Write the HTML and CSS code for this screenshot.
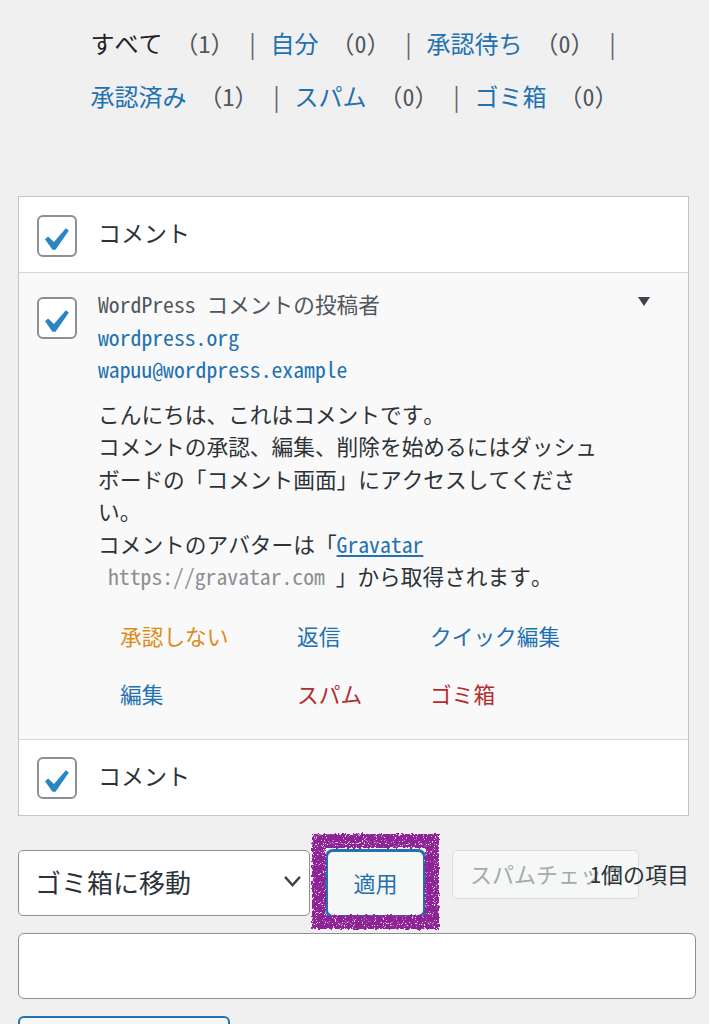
FILE: index.html
```html
<!DOCTYPE html>
<html lang="ja">
<head>
<meta charset="utf-8">
<title>コメント</title>
<link rel="stylesheet" href="styles.css">
</head>
<body>
<nav class="status">
  <div class="status-line"><span class="current">すべて</span> <span class="count">（1）</span> <span class="sep">|</span> <a class="link">自分</a> <span class="count">（0）</span> <span class="sep">|</span> <a class="link">承認待ち</a> <span class="count">（0）</span> <span class="sep">|</span></div>
  <div class="status-line"><a class="link">承認済み</a> <span class="count">（1）</span> <span class="sep">|</span> <a class="link">スパム</a> <span class="count">（0）</span> <span class="sep">|</span> <a class="link">ゴミ箱</a> <span class="count">（0）</span></div>
</nav>

<div class="table">
  <div class="row row-edge">
    <span class="cb"><svg class="check" viewBox="3.17 0.18 15.65 16.1"><path d="M14.83 4.89l1.34.94-5.81 8.38H9.02L5.78 9.67l1.34-1.25 2.57 2.4z"/></svg></span>
    <span class="col-label">コメント</span>
  </div>
  <div class="row row-comment">
    <span class="cb cb-top"><svg class="check" viewBox="3.17 0.18 15.65 16.1"><path d="M14.83 4.89l1.34.94-5.81 8.38H9.02L5.78 9.67l1.34-1.25 2.57 2.4z"/></svg></span>
    <div class="comment">
      <div class="author">
        <div class="author-name">WordPress コメントの投稿者</div>
        <div><a class="link">wordpress.org</a></div>
        <div><a class="link">wapuu@wordpress.example</a></div>
      </div>
      <div class="comment-text">
        <p>こんにちは、これはコメントです。<br>コメントの承認、編集、削除を始めるにはダッシュボードの「コメント画面」にアクセスしてください。<br>コメントのアバターは「<a class="link under">Gravatar</a> <span class="url">https://gravatar.com</span> 」から取得されます。</p>
      </div>
      <div class="row-actions">
        <a class="act unapprove">承認しない</a>
        <a class="act">返信</a>
        <a class="act">クイック編集</a>
        <a class="act">編集</a>
        <a class="act danger">スパム</a>
        <a class="act danger">ゴミ箱</a>
      </div>
    </div>
    <span class="toggle"></span>
  </div>
  <div class="row row-edge row-foot">
    <span class="cb"><svg class="check" viewBox="3.17 0.18 15.65 16.1"><path d="M14.83 4.89l1.34.94-5.81 8.38H9.02L5.78 9.67l1.34-1.25 2.57 2.4z"/></svg></span>
    <span class="col-label">コメント</span>
  </div>
</div>

<div class="bulk">
  <div class="select">
    <span>ゴミ箱に移動</span>
    <svg class="chev" viewBox="0 0 20 14"><path d="M2 2l8 9 8-9" fill="none" stroke="#3c434a" stroke-width="2.6"/></svg>
  </div>
  <button class="apply">適用</button>
  <button class="spam" disabled>スパムチェック</button>
  <span class="num">1個の項目</span>
  <svg class="scribble" viewBox="0 0 134 104" width="134" height="104">
    <defs>
      <filter id="rough" x="-10%" y="-10%" width="120%" height="120%">
        <feTurbulence type="fractalNoise" baseFrequency="0.35" numOctaves="2" seed="4" result="n"/>
        <feDisplacementMap in="SourceGraphic" in2="n" scale="5" xChannelSelector="R" yChannelSelector="G" result="d"/>
        <feTurbulence type="fractalNoise" baseFrequency="0.9" numOctaves="1" seed="11" result="s"/>
        <feColorMatrix in="s" type="matrix" values="0 0 0 0 1  0 0 0 0 1  0 0 0 0 1  0 0 0 9 -5.6" result="spots"/>
        <feComposite in="spots" in2="d" operator="in" result="sp"/>
        <feMerge><feMergeNode in="d"/><feMergeNode in="sp"/></feMerge>
      </filter>
    </defs>
    <rect x="9" y="12" width="113" height="81" fill="none" stroke="#8e2396" stroke-width="14" filter="url(#rough)"/>
  </svg>
</div>

<div class="text-input"></div>
<div class="bottom-btn"></div>
</body>
</html>
```

FILE: styles.css
```css
html, body {
  margin: 0;
  padding: 0;
}
body {
  background: #f0f0f1;
  color: #2c3338;
  font-family: "Noto Sans Mono CJK JP", "Noto Sans CJK JP", monospace;
  overflow: hidden;
}
a { text-decoration: none; }

.status {
  padding-top: 16px;
  text-align: center;
  font-size: 24px;
  line-height: 53px;
}
.current { color: #1d2327; }
.link { color: #2271b1; }
.count { color: #50575e; }
.sep { color: #646970; }

.table {
  margin: 74px 20px 0 18px;
  border: 1px solid #c3c4c7;
  background: #fff;
}
.row {
  display: flex;
}
.row-edge {
  height: 75px;
  align-items: center;
  border-bottom: 1px solid #d5d8dc;
}
.row-foot { border-bottom: none; }
.cb {
  flex: none;
  box-sizing: border-box;
  width: 40px;
  height: 42px;
  margin-left: 18px;
  border: 2px solid #8c8f94;
  border-radius: 6px;
  background: #fff;
  display: block;
}
.row-edge .cb { margin-top: 2px; }
.check {
  display: block;
  width: 36px;
  height: 38px;
  fill: #2a86c2;
}
.col-label {
  margin-left: 21px;
  margin-bottom: 5px;
  font-size: 23px;
  color: #2c3338;
}

.row-comment {
  background: #f9f9f9;
  align-items: flex-start;
  padding: 15px 0 15px 0;
  border-bottom: 1px solid #d5d8dc;
}
.cb-top { margin-top: 9px; }
.comment {
  flex: none;
  width: 508px;
  margin-left: 21px;
  font-size: 21.7px;
  line-height: 32.5px;
}
.author-name { color: #50575e; }
.comment-text p {
  margin: 12px 0 0;
  color: #2c3338;
}
.under { text-decoration: underline; }
.url {
  color: #8c8f94;
  padding-left: 10px;
}
.row-actions {
  margin-top: 15px;
  padding-left: 22px;
  display: grid;
  grid-template-columns: 177px 133px auto;
  grid-auto-rows: 58px;
  align-items: center;
}
.act { color: #2271b1; }
.unapprove { color: #dd8a17; }
.danger { color: #b32d2e; }
.toggle {
  flex: none;
  margin: 9px 38px 0 auto;
  width: 0;
  height: 0;
  border-left: 6.5px solid transparent;
  border-right: 6.5px solid transparent;
  border-top: 9px solid #3c434a;
}

.bulk {
  position: relative;
  display: flex;
  align-items: flex-start;
  margin: 34px 0 0 18px;
}
.select {
  flex: none;
  box-sizing: border-box;
  width: 292px;
  height: 66px;
  border: 1px solid #8c8f94;
  border-radius: 5px;
  background: #fff;
  display: flex;
  align-items: center;
  padding-left: 16px;
  padding-bottom: 2px;
  font-size: 26px;
  color: #2c3338;
}
.chev {
  width: 19px;
  height: 13px;
  margin-left: auto;
  margin-right: 7px;
}
.apply {
  flex: none;
  box-sizing: border-box;
  width: 99px;
  height: 67px;
  margin-left: 16px;
  border: 2px solid #2271b1;
  box-shadow: 0 0 0 1px #2271b1;
  border-radius: 7px;
  background: #f6f7f7;
  color: #2271b1;
  font-family: inherit;
  font-size: 22px;
  padding: 0 0 3px;
}
.spam {
  flex: none;
  box-sizing: border-box;
  width: 187px;
  height: 49px;
  margin-left: 27px;
  border: 1px solid #dcdcde;
  border-radius: 5px;
  background: #f6f7f7;
  color: #a7aaad;
  font-family: inherit;
  font-size: 22px;
  text-align: left;
  padding: 0 0 2px 17px;
  overflow: hidden;
  white-space: nowrap;
}
.num {
  position: absolute;
  right: 20px;
  top: 8px;
  line-height: 30px;
  font-size: 22px;
  color: #2c3338;
}
.scribble {
  position: absolute;
  left: 292px;
  top: -21px;
}
.text-input {
  box-sizing: border-box;
  height: 66px;
  margin: 16px 13px 0 18px;
  border: 1px solid #8c8f94;
  border-radius: 6px;
  background: #fff;
}
.bottom-btn {
  box-sizing: border-box;
  width: 212px;
  height: 50px;
  margin: 17px 0 0 18px;
  border: 2px solid #2271b1;
  border-radius: 6px;
  background: #f6f7f7;
}
```
